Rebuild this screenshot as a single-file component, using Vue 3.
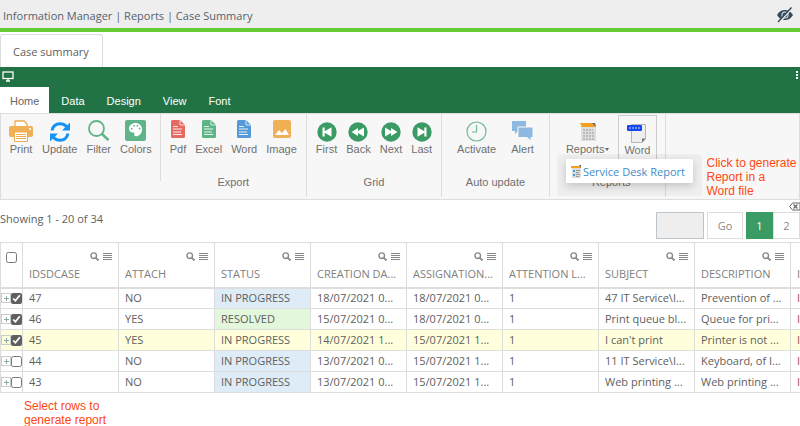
<template>
  <div class="page">
    <header class="top-bar">
      <span>Information Manager | Reports | Case Summary</span>
      <button class="plain-btn" aria-label="Hide">
        <svg width="18" height="16" viewBox="0 0 18 16" fill="none">
          <path d="M1 8C4 3.600 6.500 3 9 3s5 .6 8 5c-3 4.400-5.500 5-8 5s-5-.6-8-5z" fill="#34495a" />
          <circle cx="9" cy="8" r="3.600" fill="#eee" />
          <circle cx="9" cy="8" r="2.600" fill="#34495a" />
          <path d="M3.200 15.400 16.200.8" stroke="#eee" stroke-width="2" />
          <path d="M2 15 15.500.6" stroke="#34495a" stroke-width="1.400" />
        </svg>
      </button>
    </header>

    <nav class="page-tabs">
      <a href="#" class="page-tab">Case summary</a>
    </nav>

    <div class="ribbon-head">
      <div class="ribbon-title">
        <svg width="12" height="11" viewBox="0 0 12 11" fill="none">
          <rect x="1" y="1" width="10" height="6.500" stroke="#fff" stroke-width="1.300" />
          <path d="M4 10h4M6 8v2" stroke="#fff" stroke-width="1.500" />
        </svg>
        <svg width="3" height="9" viewBox="0 0 3 9" fill="#fff">
          <path d="M0 0h2v2H0zM0 3h2v2H0zM0 6h2v2H0z" />
        </svg>
      </div>
      <div class="ribbon-tabs">
        <button v-for="tab in tabs" :key="tab" :class="{ active: tab === activeTab }" @click="activeTab = tab">{{ tab }}</button>
      </div>
    </div>

    <section class="ribbon">
      <div v-for="(group, i) in groups" :key="i" class="group" :class="group.cls">
        <div class="tools">
          <button v-for="tool in group.tools" :key="tool.label" class="tool" :class="{ boxed: tool.boxed }">
            <svg :width="tool.w" height="22" :viewBox="`0 0 ${tool.w} 22`" fill="none" v-html="icons[tool.icon]"></svg>
            <span>{{ tool.label }}<i v-if="tool.caret" class="caret"></i></span>
          </button>
        </div>
        <div class="group-name">{{ group.name }}</div>
        <a v-if="group.menu" href="#" class="dropdown">
          <svg width="11" height="13" viewBox="0 0 11 13">
            <path d="M1 2h9v11H1z" fill="#dcdcdc" />
            <path d="M0 1h9l1 2H0z" fill="#f5a11c" />
            <path d="M8 0h2v3z" fill="#666" />
            <path d="M2 5h2v2H2zM2 9h2v2H2z" fill="#4a9fd8" />
            <path d="M5 5h4v1H5zM5 7h3v1H5zM5 9h4v1H5zM5 11h3v1H5z" fill="#999" />
          </svg>
          {{ group.menu }}
        </a>
      </div>
      <p class="note">Click to generate<br />Report in a<br />Word file</p>
    </section>

    <div class="grid-top">
      <span class="showing">Showing 1 - 20 of 34</span>
      <div class="pager-side">
        <svg width="11" height="9" viewBox="0 0 11 9" fill="none" stroke="#666">
          <path d="M3.500 1H11v7H3.500L.7 4.500z" />
          <path d="M4.500 2.500l4 4M8.500 2.500l-4 4" stroke-width="1.300" />
        </svg>
        <div class="pager">
          <input type="text" aria-label="Page number" />
          <button class="go">Go</button>
          <div class="pages">
            <button class="current">1</button>
            <button>2</button>
          </div>
        </div>
      </div>
    </div>

    <div class="grid-wrap">
      <table>
        <thead>
          <tr>
            <th class="check-col"><input type="checkbox" aria-label="Select all" /></th>
            <th v-for="col in columns" :key="col">
              <div class="col-icons">
                <svg width="9" height="9" viewBox="0 0 9 9" fill="none" stroke="#888">
                  <circle cx="3.700" cy="3.700" r="2.800" stroke-width="1.400" />
                  <path d="M5.600 5.600 8.500 8.500" stroke-width="1.800" />
                </svg>
                <svg width="9" height="9" viewBox="0 0 9 9" fill="#888">
                  <path d="M0 1h9v1H0zM0 3h9v1H0zM0 5h9v1H0zM0 7h9v1H0z" />
                </svg>
              </div>
              <div class="col-name">{{ col }}</div>
            </th>
          </tr>
        </thead>
        <tbody>
          <tr v-for="row in rows" :key="row.id" :class="{ highlight: row.highlight }">
            <td class="check-col">
              <div class="row-tools">
                <button class="expand" aria-label="Expand"></button>
                <input v-model="row.checked" type="checkbox" :aria-label="row.id" />
              </div>
            </td>
            <td>{{ row.id }}</td>
            <td>{{ row.attach }}</td>
            <td :class="row.status === 'RESOLVED' ? 'resolved' : 'progress'">{{ row.status }}</td>
            <td>{{ row.created }}</td>
            <td>{{ row.assigned }}</td>
            <td>1</td>
            <td>{{ row.subject }}</td>
            <td>{{ row.description }}</td>
            <td class="cut">I</td>
          </tr>
        </tbody>
      </table>
    </div>

    <p class="note note-rows">Select rows to<br />generate report</p>
  </div>
</template>

<script setup>
import { ref } from 'vue';

const tabs = ['Home', 'Data', 'Design', 'View', 'Font'];
const activeTab = ref('Home');

const file = (color) => `
  <path d="M1.500 0H9l5 5v11.500q0 1.500-1.500 1.500h-11Q0 18 0 16.500v-15Q0 0 1.500 0z" fill="${color}"/>
  <path d="M9 0v5h5" stroke="#fff" stroke-opacity=".75"/>
  <path d="M2 6.500h5M2 9h9M2 12h8M2 14.500h9" stroke="#fff" stroke-opacity=".85"/>`;

const circle = (d) => `<circle cx="10" cy="12" r="9.700" fill="#3a9b64"/><path d="${d}" fill="#fff"/>`;

const icons = {
  print: `
    <path d="M6 6V1h9l3 3v2" fill="#fff" stroke="#f0ad4e" stroke-width="1.300"/>
    <rect y="6" width="24" height="11" rx="2" fill="#f0b055"/>
    <path d="M5.500 12h13v9.500h-13z" fill="#fff" stroke="#f0ad4e"/>
    <path d="M7 14.500h10M7 16.500h10M7 18.500h10" stroke="#f0ad4e"/>
    <circle cx="21" cy="9" r="1" fill="#fff"/>`,
  update: `
    <path d="M2 10.500C3 6 6.500 3.800 10 3.800c2.600 0 4.800 1 6.300 2.700M18 13.500c-1 4.500-4.500 6.700-8 6.700-2.600 0-4.800-1-6.300-2.700" stroke="#1592f5" stroke-width="3"/>
    <path d="M20 2.500v8h-8zM0 21.500v-8h8z" fill="#1592f5"/>`,
  filter: `
    <circle cx="8.500" cy="8.500" r="7.500" stroke="#5fb48a" stroke-width="1.800"/>
    <path d="M14 14l6.500 6" stroke="#5fb48a" stroke-width="2.500"/>`,
  colors: `
    <rect width="21" height="21" rx="2" fill="#5fb48a"/>
    <path d="M10.500 3C6.800 3 4 5.500 4 8.800c0 2.700 2.300 4.200 4.500 3.700 1.300-.2 1 1 .7 1.800-.3 1 .4 1.900 1.500 1.900 4 0 6.300-3.300 6.300-6.800C17 5.600 14 3 10.500 3z" fill="#fff"/>
    <g fill="#5fb48a"><circle cx="6.700" cy="8.700" r=".9"/><circle cx="9" cy="5.800" r=".9"/><circle cx="12.400" cy="5.800" r=".9"/><circle cx="14.600" cy="8.500" r=".9"/></g>`,
  pdf: file('#e56a62'),
  excel: file('#5cb487'),
  word: file('#559ad6'),
  image: `
    <rect width="18" height="18" rx="2" fill="#f0b055"/>
    <path d="M2 15l4-5 3 3.200L12.500 9 16 15z" fill="#fff"/>`,
  first: circle('M5.500 7.500h2.200v3.700l6.800-4v9.600l-6.800-4v3.700H5.500z'),
  back: circle('M3.500 12l6.500-4v3l6-3.500v9L10 13v3z'),
  next: circle('M16.500 12 10 8v3L4 7.500v9L10 13v3z'),
  last: circle('M14.500 7.500h-2.200v3.700l-6.800-4v9.600l6.800-4v3.700h2.200z'),
  clock: `
    <circle cx="10.500" cy="11.500" r="9.500" stroke="#6fba91" stroke-width="1.200"/>
    <path d="M10.500 5v7H6" stroke="#6fba91" stroke-width="1.200"/>`,
  chat: `
    <path d="M0 1h14v10H6l-3 3v-3H0z" fill="#8db9e0"/>
    <path d="M6 7h15v10.500h-2V21l-4-3.500H6z" fill="#8db9e0" stroke="#f7f7f7"/>`,
  reports: `
    <path d="M1 4h15v17H1z" fill="#dedede"/>
    <path d="M0 3h13l3 4H2z" fill="#f3a01e"/>
    <path d="M12 3h3l1 4z" fill="#666"/>
    <path d="M3 10h10M3 13h11M3 16h11M3 19h11" stroke="#b0b0b0" stroke-width="1.300" stroke-dasharray="2 1"/>`,
  doc: `
    <path d="M4.500 3.500h14V18L15 21.500H4.500z" fill="#eeeeee" stroke="#b5b5b5"/>
    <path d="M18.500 17.500H15v4z" fill="#777"/>
    <rect y="4" width="15" height="6" rx="1" fill="#1748e8"/>
    <path d="M2 7h11" stroke="#8fa8ff" stroke-width="1.500" stroke-dasharray="2 1"/>`
};

const groups = [
  {
    name: '',
    cls: 'short',
    tools: [
      { label: 'Print', icon: 'print', w: 24 },
      { label: 'Update', icon: 'update', w: 20 },
      { label: 'Filter', icon: 'filter', w: 21 },
      { label: 'Colors', icon: 'colors', w: 21 }
    ]
  },
  {
    name: 'Export',
    tools: [
      { label: 'Pdf', icon: 'pdf', w: 14 },
      { label: 'Excel', icon: 'excel', w: 14 },
      { label: 'Word', icon: 'word', w: 14 },
      { label: 'Image', icon: 'image', w: 18 }
    ]
  },
  {
    name: 'Grid',
    tools: [
      { label: 'First', icon: 'first', w: 20 },
      { label: 'Back', icon: 'back', w: 20 },
      { label: 'Next', icon: 'next', w: 20 },
      { label: 'Last', icon: 'last', w: 20 }
    ]
  },
  {
    name: 'Auto update',
    cls: 'wide',
    tools: [
      { label: 'Activate', icon: 'clock', w: 21 },
      { label: 'Alert', icon: 'chat', w: 21 }
    ]
  },
  {
    name: 'Reports',
    cls: 'reports',
    menu: 'Service Desk Report',
    tools: [
      { label: 'Reports', icon: 'reports', w: 16, caret: true },
      { label: 'Word', icon: 'doc', w: 20, boxed: true }
    ]
  }
];

const columns = ['IDSDCASE', 'ATTACH', 'STATUS', 'CREATION DA...', 'ASSIGNATION...', 'ATTENTION L...', 'SUBJECT', 'DESCRIPTION', 'I'];

const rows = ref([
  { id: '47', attach: 'NO', status: 'IN PROGRESS', created: '18/07/2021 0...', assigned: '18/07/2021 0...', subject: '47 IT Service\\I...', description: 'Prevention of ...', checked: true },
  { id: '46', attach: 'YES', status: 'RESOLVED', created: '15/07/2021 0...', assigned: '18/07/2021 0...', subject: 'Print queue bl...', description: 'Queue for pri...', checked: true },
  { id: '45', attach: 'YES', status: 'IN PROGRESS', created: '14/07/2021 1...', assigned: '15/07/2021 1...', subject: "I can't print", description: 'Printer is not ...', checked: true, highlight: true },
  { id: '44', attach: 'NO', status: 'IN PROGRESS', created: '13/07/2021 0...', assigned: '15/07/2021 1...', subject: '11 IT Service\\I...', description: 'Keyboard, of I...', checked: false },
  { id: '43', attach: 'NO', status: 'IN PROGRESS', created: '13/07/2021 0...', assigned: '15/07/2021 1...', subject: 'Web printing ...', description: 'Web printing ...', checked: false }
]);
</script>

<style>
body { margin: 0; background: #fff; overflow-x: hidden; }
</style>

<style scoped>
.page { font-family: "Open Sans", "Noto Sans", sans-serif; font-size: 11px; color: #606060; }
.page * { box-sizing: border-box; }
button { font: inherit; color: inherit; border: none; background: none; padding: 0; cursor: pointer; }
svg { display: block; flex: none; }
p { margin: 0; }

/* Top bar */
.top-bar { display: flex; justify-content: space-between; align-items: center; height: 32px; padding: 2px 6px 0 3px; background: #eee; border-bottom: 4px solid #66cc33; color: #56616b; }
.page-tabs { display: flex; height: 35px; padding-top: 2px; }
.page-tab { display: flex; align-items: center; padding: 0 13px 0 12px; border: 1px solid #ddd; border-bottom: none; border-radius: 3px 3px 0 0; color: #606060; text-decoration: none; }

/* Ribbon */
.ribbon-head { background: #217346; font-family: "Liberation Sans", Arial, sans-serif; }
.ribbon-title { display: flex; justify-content: space-between; height: 20px; padding: 4px 1px 0 2px; }
.ribbon-tabs { display: flex; gap: 2px; height: 26px; font-size: 11px; color: #fff; }
.ribbon-tabs button { padding: 1px 10px 0; }
.ribbon-tabs .active { background: #fff; color: #666; }

.ribbon { display: flex; height: 87px; border: 1px solid #ddd; background: #f7f7f7; font-family: "Liberation Sans", Arial, sans-serif; font-size: 11px; color: #707070; }
.group { position: relative; display: flex; flex-direction: column; justify-content: space-between; height: 83px; padding: 6px 9px 8px; border-right: 1px solid #ddd; }
.group.short { height: 67px; padding-left: 8px; padding-right: 8px; }
.group.wide { padding-left: 15px; padding-right: 15px; }
.group.reports { padding-left: 16px; padding-right: 8px; }
.tools { display: flex; gap: 9px; }
.wide .tools { gap: 15px; }
.tool { display: flex; flex-direction: column; align-items: center; line-height: 14px; }
.boxed { margin-top: -5px; padding: 5px 5px 0; height: 44px; border: 1px solid #ccc; border-bottom: none; }
.caret { display: inline-block; margin-left: 1px; vertical-align: 2px; border: 2px solid transparent; border-top: 3px solid #666; border-bottom: none; }
.group-name { text-align: center; line-height: 14px; }
.dropdown { position: absolute; z-index: 1; left: 16px; top: 45px; display: flex; align-items: center; gap: 1px; height: 24px; padding: 0 8px 0 5px; background: #fff; font-family: "Open Sans", "Noto Sans", sans-serif; color: #428bca; text-decoration: none; white-space: nowrap; border-radius: 1px; box-shadow: 0 3px 8px rgba(0, 0, 0, 0.18), 0 4px 1px 9px rgba(0, 0, 0, 0.035); }

.note { font-family: "Liberation Sans", Arial, sans-serif; font-size: 12px; line-height: 14px; color: #ff4713; }
.ribbon .note { margin: 42px 0 0 41px; white-space: nowrap; }
.note-rows { padding: 6px 24px 0; }

/* Pager */
.grid-top { display: flex; justify-content: space-between; height: 42px; padding-top: 2px; }
.showing { margin-top: 8px; line-height: 18px; }
.pager-side { display: flex; flex-direction: column; align-items: flex-end; }
.pager { display: flex; gap: 3px; height: 27px; margin-top: 1px; color: #888; }
.pager input { width: 48px; border: 1px solid #bcc5cc; background: #eee; padding: 0 4px; }
.go { width: 36px; border: 1px solid #ddd; }
.pages { display: flex; }
.pages button { width: 27px; border: 1px solid #ddd; }
.pages .current { background: #3a9b64; border-color: #3a9b64; color: #fff; }

/* Grid */
.grid-wrap { overflow: hidden; }
table { width: 887px; table-layout: fixed; border-collapse: collapse; }
th, td { border: 1px solid #ddd; padding: 0 0 0 6px; font-weight: normal; text-align: left; white-space: nowrap; overflow: hidden; }
th { height: 45px; vertical-align: top; color: #808080; border-bottom: 2px solid #ddd; }
td { height: 21px; line-height: 18px; }
.check-col { width: 22px; padding: 0; text-align: center; }
.col-icons { display: flex; justify-content: flex-end; gap: 4px; padding: 9px 6px 0 0; }
.col-name { line-height: 18px; margin-top: 4px; }
input[type="checkbox"] { width: 11px; height: 11px; margin: 0; accent-color: #606060; }
th input[type="checkbox"] { margin-top: 9px; }
.row-tools { display: flex; align-items: center; justify-content: center; }
.expand { display: grid; place-items: center; width: 10px; height: 10px; border: 1px solid #ccc; background: linear-gradient(#8aa, #8aa) center / 5px 1px no-repeat, linear-gradient(#8aa, #8aa) center / 1px 5px no-repeat; }
.resolved { background: #e2f7dc; }
.progress { background: #ddecf7; }
.highlight td { background: #ffffdc; }
.cut { color: #a05050; }
</style>
